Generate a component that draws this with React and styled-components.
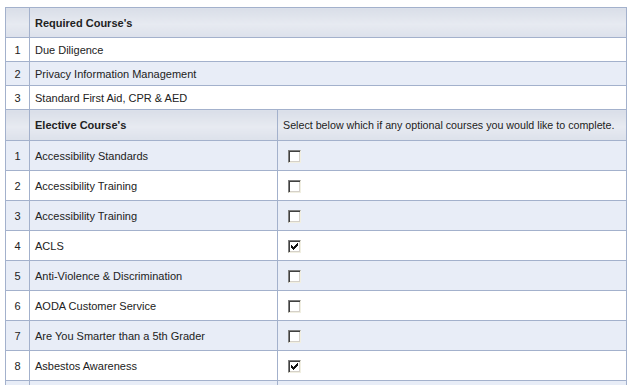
import React from "react";
import styled, { createGlobalStyle } from "styled-components";

const Global = createGlobalStyle`
  body {
    margin: 0;
    padding: 7px 4px 0 5px;
    background: #fff;
    font-family: Tahoma, "Liberation Sans", Arial, sans-serif;
    font-size: 11px;
    color: #222;
  }
`;

const Table = styled.table`
  width: 622px;
  border-collapse: collapse;
  table-layout: fixed;
`;

const HeadCell = styled.th`
  height: ${p => p.$h || 29}px;
  padding: 0 5px;
  text-align: left;
  font-weight: ${p => (p.$plain ? "normal" : "bold")};
  font-size: ${p => (p.$plain ? "10.7px" : "11px")};
  background: linear-gradient(#d9dee8, #e7eaf1 55%, #dce1eb);
  border: 1px solid #a3b1cc;
  white-space: nowrap;
`;

const Row = styled.tr`
  background: ${p => (p.$alt ? "#e8edf7" : "#fff")};
`;

const NumCell = styled.td`
  padding: 0 5px;
  text-align: center;
  border: 1px solid #a3b1cc;
  height: ${p => p.$h}px;
`;

const Cell = styled.td`
  padding: 0 5px;
  border: 1px solid #a3b1cc;
  height: ${p => p.$h}px;
  vertical-align: ${p => (p.$top ? "top" : "middle")};
`;

const Box = styled.span`
  display: inline-block;
  width: 11px;
  height: 11px;
  margin: 9px 0 0 5px;
  background: #fff;
  border-style: solid;
  border-width: 1px;
  border-color: #808080 #f1efe2 #f1efe2 #808080;
  box-shadow: inset 1px 1px 0 #404040, inset -1px -1px 0 #d4d0c8;
  position: relative;
`;

const Tick = styled.svg`
  position: absolute;
  left: 2px;
  top: 2px;
`;

const CheckBox = ({ checked }) => (
  <Box>
    {checked && (
      <Tick width="7" height="7" viewBox="0 0 7 7">
        <path d="M0 2h1v1h1v1h1V3h1V2h1V1h1V0h1v3H6v1H5v1H4v1H3v1H2V6H1V5H0z" fill="#111" />
      </Tick>
    )}
  </Box>
);

const required = ["Due Diligence", "Privacy Information Management", "Standard First Aid, CPR & AED"];

const electives = [
  ["Accessibility Standards", false],
  ["Accessibility Training", false],
  ["Accessibility Training", false],
  ["ACLS", true],
  ["Anti-Violence & Discrimination", false],
  ["AODA Customer Service", false],
  ["Are You Smarter than a 5th Grader", false],
  ["Asbestos Awareness", true],
];

export default function App() {
  return (
    <>
      <Global />
      <Table>
        <colgroup>
          <col style={{ width: 24 }} />
          <col style={{ width: 248 }} />
          <col />
        </colgroup>
        <tbody>
          <tr>
            <HeadCell />
            <HeadCell colSpan={2}>Required Course's</HeadCell>
          </tr>
          {required.map((name, i) => (
            <Row key={name} $alt={i % 2 === 1}>
              <NumCell $h={23}>{i + 1}</NumCell>
              <Cell $h={23} colSpan={2}>{name}</Cell>
            </Row>
          ))}
          <tr>
            <HeadCell $h={30} />
            <HeadCell $h={30}>Elective Course's</HeadCell>
            <HeadCell $h={30} $plain>Select below which if any optional courses you would like to complete.</HeadCell>
          </tr>
          {electives.map(([name, checked], i) => (
            <Row key={i} $alt={i % 2 === 0}>
              <NumCell $h={29}>{i + 1}</NumCell>
              <Cell $h={29}>{name}</Cell>
              <Cell $h={29} $top>
                <CheckBox checked={checked} />
              </Cell>
            </Row>
          ))}
          <Row $alt>
            <NumCell $h={29} />
            <Cell $h={29} />
            <Cell $h={29} />
          </Row>
        </tbody>
      </Table>
    </>
  );
}
